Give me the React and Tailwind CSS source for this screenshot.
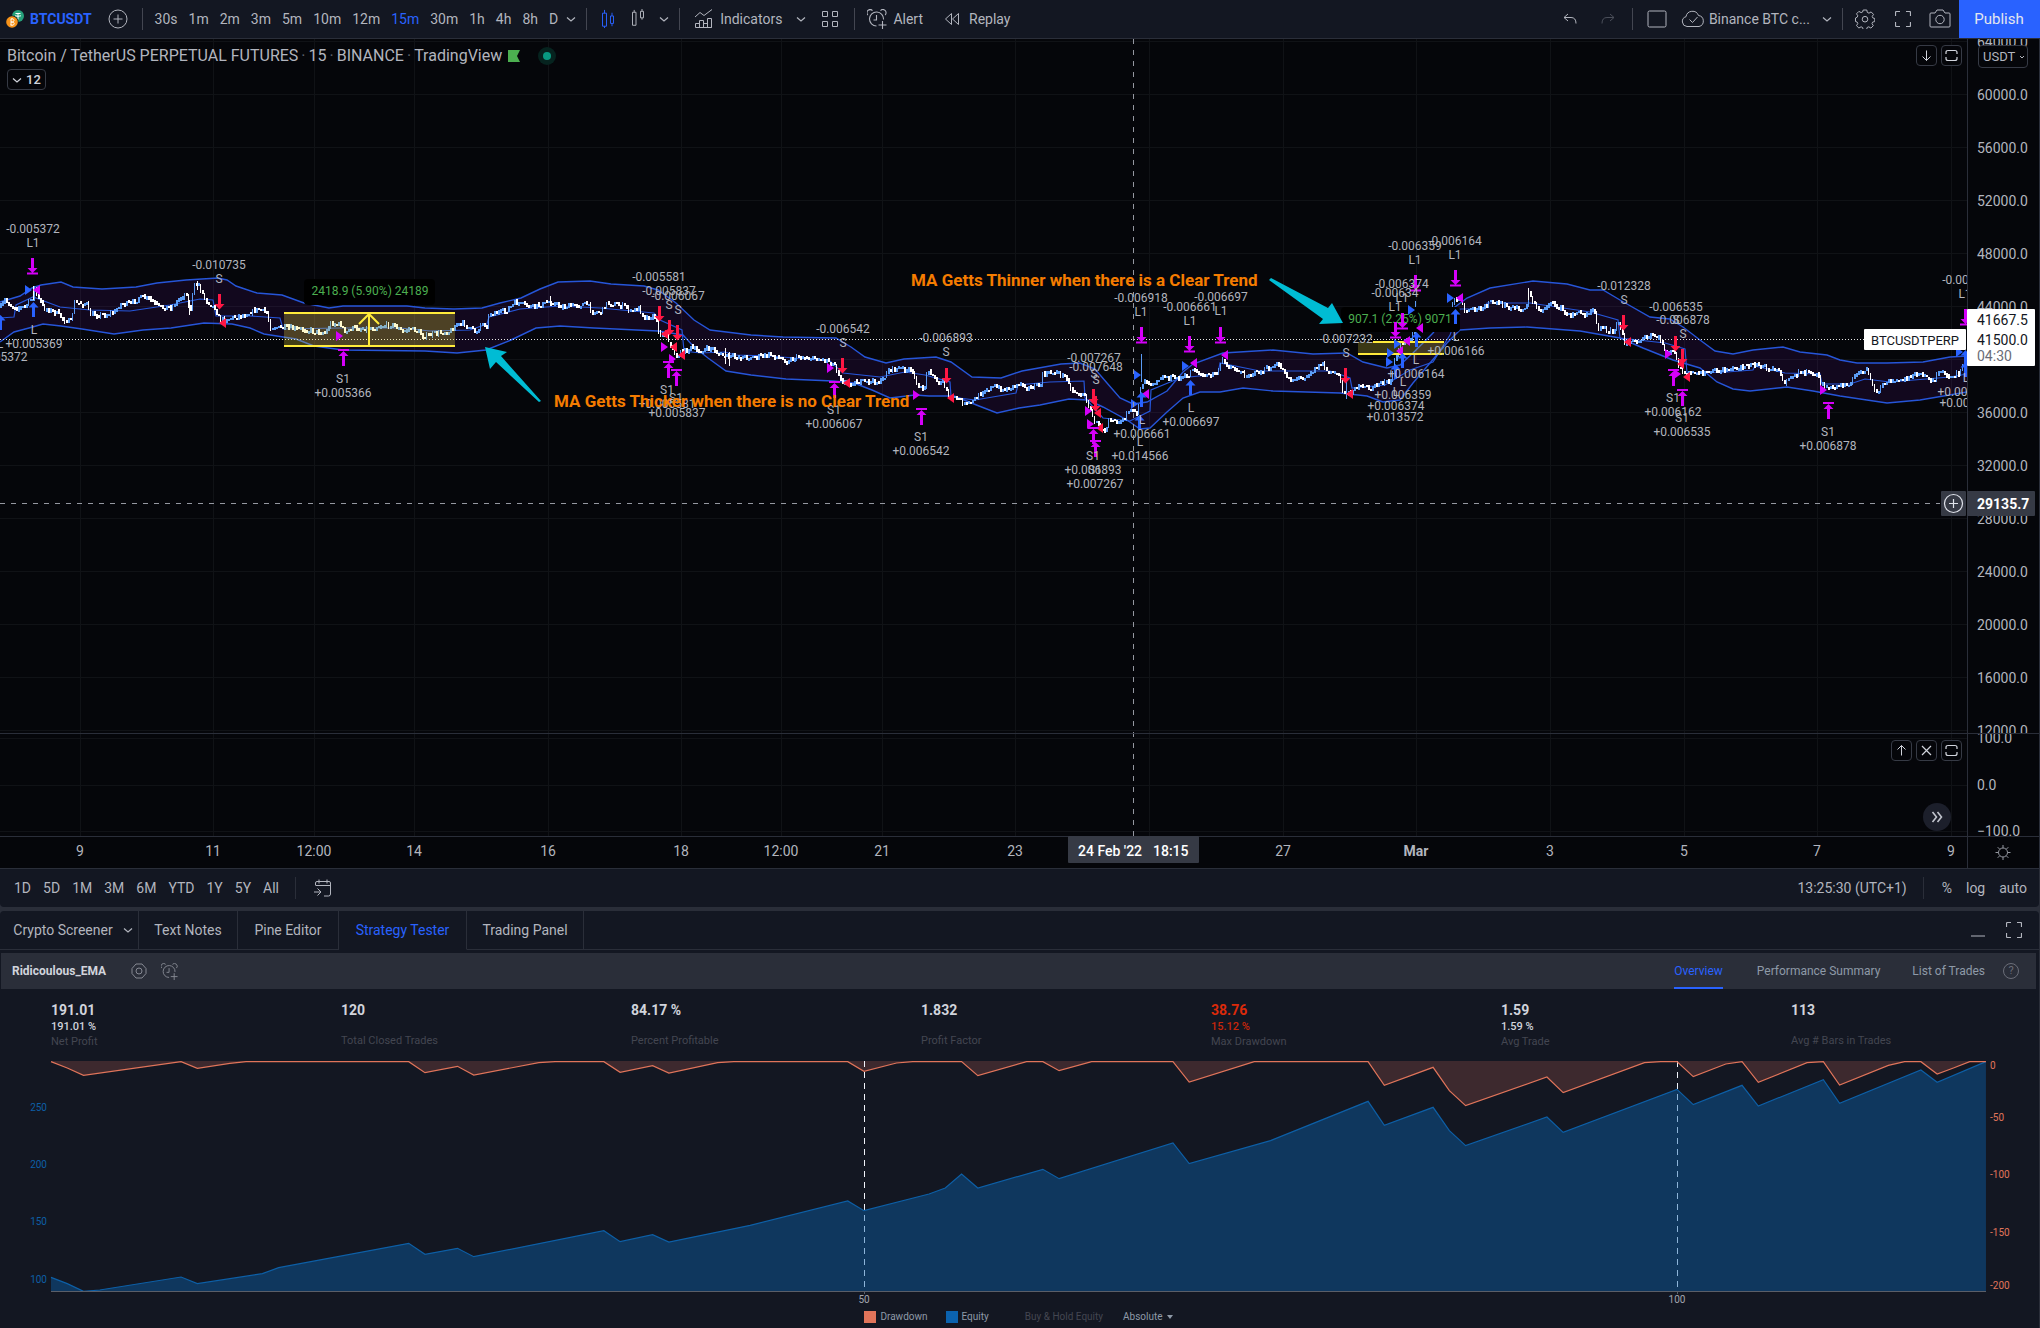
import React, { useState } from "react";

/* ---------- price chart data ---------- */

const PRICE = [
    [0, 307], [4, 300], [9, 305], [16, 308], [25, 306], [32, 297], [34, 288], [37, 298], [43, 308], [54, 312], [64, 320], [70, 322],
    [74, 303], [86, 304], [89, 315], [104, 315], [114, 312], [119, 304], [130, 304], [139, 297], [148, 299], [159, 308], [171, 307],
    [180, 297], [186, 293], [189, 315], [193, 288], [197, 283], [205, 300], [214, 308], [219, 320], [230, 318], [243, 315], [257, 309],
    [266, 313], [270, 327], [282, 328], [304, 330], [325, 333], [330, 323], [341, 325], [344, 334], [350, 328], [368, 329], [379, 326],
    [393, 325], [402, 332], [409, 328], [418, 332], [423, 337], [434, 334], [450, 331], [455, 325], [464, 324], [475, 333], [480, 324],
    [486, 325], [489, 313], [504, 312], [514, 303], [532, 307], [550, 302], [561, 307], [586, 304], [592, 312], [601, 312], [605, 303],
    [626, 307], [630, 312], [638, 308], [644, 317], [654, 317], [659, 333], [667, 335], [669, 345], [676, 357], [681, 352], [690, 348],
    [697, 352], [711, 348], [719, 355], [729, 357], [754, 357], [770, 355], [786, 361], [797, 357], [826, 360], [834, 365], [842, 382],
    [851, 383], [861, 382], [881, 382], [887, 370], [901, 368], [911, 372], [919, 387], [923, 393], [926, 372], [933, 373], [937, 387],
    [942, 378], [947, 397], [956, 398], [965, 405], [974, 400], [983, 390], [994, 387], [1004, 390], [1019, 383], [1029, 388], [1040, 385],
    [1042, 375], [1054, 372], [1067, 378], [1070, 390], [1085, 397], [1093, 420], [1100, 428], [1105, 430], [1108, 417], [1118, 422],
    [1128, 413], [1137, 412], [1140, 387], [1143, 380], [1150, 383], [1160, 377], [1173, 378], [1187, 377], [1192, 368], [1203, 377],
    [1218, 372], [1221, 360], [1227, 365], [1243, 375], [1260, 372], [1278, 365], [1290, 380], [1303, 377], [1322, 363], [1327, 373],
    [1338, 373], [1341, 387], [1346, 397], [1353, 387], [1370, 388], [1380, 382], [1390, 383], [1394, 360], [1400, 345], [1410, 337],
    [1416, 320], [1417, 315], [1447, 315], [1453, 300], [1460, 300], [1465, 312], [1480, 308], [1490, 302], [1507, 307], [1525, 310],
    [1528, 292], [1532, 303], [1540, 311], [1548, 303], [1560, 308], [1567, 317], [1573, 312], [1583, 315], [1593, 307], [1597, 327],
    [1612, 332], [1617, 323], [1623, 333], [1624, 343], [1637, 342], [1652, 335], [1660, 340], [1665, 353], [1673, 352], [1677, 363],
    [1683, 375], [1703, 373], [1727, 370], [1737, 367], [1757, 365], [1767, 368], [1777, 368], [1781, 380], [1785, 383], [1793, 375],
    [1800, 372], [1817, 375], [1820, 383], [1829, 389], [1840, 385], [1850, 383], [1860, 370], [1866, 370], [1870, 380], [1875, 395],
    [1883, 383], [1903, 380], [1912, 373], [1933, 380], [1938, 372], [1950, 379], [1958, 373], [1966, 357],
];

const UPPER = [
    [0, 302], [20, 296], [32, 288], [41, 285], [61, 282], [73, 287], [102, 289], [136, 287], [157, 283], [186, 280], [218, 278], [227, 280],
    [236, 286], [257, 293], [282, 295], [304, 303], [329, 308], [343, 306], [371, 306], [407, 306], [425, 308], [454, 309], [482, 308],
    [500, 303], [521, 298], [540, 289], [558, 282], [590, 281], [611, 284], [644, 286], [658, 290], [676, 303], [694, 320], [710, 330],
    [751, 335], [783, 337], [836, 338], [851, 347], [865, 357], [886, 363], [904, 359], [936, 357], [951, 362], [972, 377], [1001, 378],
    [1022, 371], [1061, 364], [1080, 363], [1095, 369], [1107, 383], [1120, 398], [1133, 404], [1147, 402], [1167, 391], [1183, 372],
    [1193, 364], [1223, 353], [1273, 350], [1313, 354], [1347, 353], [1363, 362], [1387, 368], [1400, 365], [1413, 353], [1433, 333],
    [1447, 313], [1467, 298], [1490, 288], [1533, 281], [1567, 284], [1590, 290], [1603, 290], [1620, 300], [1650, 317], [1670, 319],
    [1683, 327], [1700, 340], [1715, 351], [1733, 354], [1753, 350], [1783, 347], [1800, 352], [1827, 355], [1840, 360], [1857, 363],
    [1887, 363], [1923, 362], [1950, 357], [1967, 356],
];

const LOWER = [
    [0, 342], [14, 332], [29, 328], [43, 324], [61, 326], [82, 329], [114, 334], [143, 330], [171, 328], [204, 323], [232, 324], [250, 328],
    [264, 334], [296, 339], [314, 346], [343, 350], [425, 351], [457, 353], [486, 350], [511, 340], [536, 328], [560, 326], [594, 328],
    [658, 331], [683, 335], [694, 347], [708, 358], [726, 371], [751, 375], [786, 379], [833, 381], [854, 383], [872, 390], [890, 398],
    [915, 395], [929, 396], [954, 396], [979, 406], [997, 413], [1019, 408], [1040, 405], [1069, 399], [1088, 400], [1103, 407],
    [1127, 420], [1140, 429], [1150, 428], [1167, 412], [1183, 398], [1200, 392], [1220, 392], [1243, 388], [1273, 391], [1340, 393],
    [1367, 396], [1383, 402], [1400, 400], [1413, 383], [1430, 363], [1447, 343], [1460, 330], [1490, 328], [1527, 327], [1580, 331],
    [1620, 338], [1643, 348], [1673, 360], [1700, 368], [1717, 382], [1733, 389], [1750, 391], [1787, 387], [1813, 391], [1840, 396],
    [1887, 403], [1920, 400], [1967, 392],
];

const MIDDLE = [
    [0, 318], [14, 317], [16, 305], [33, 297], [60, 307], [90, 310], [130, 311], [170, 305], [200, 299], [213, 300], [216, 316], [250, 316],
    [280, 318], [283, 329], [340, 328], [400, 328], [430, 331], [470, 330], [487, 324], [489, 317], [520, 309], [560, 306], [600, 308],
    [654, 313], [660, 320], [682, 330], [684, 351], [700, 353], [725, 352], [735, 355], [770, 356], [830, 361], [843, 373], [880, 377],
    [905, 372], [925, 375], [950, 382], [951, 397], [975, 400], [1016, 393], [1018, 385], [1050, 382], [1084, 381], [1085, 398],
    [1103, 418], [1130, 421], [1150, 411], [1151, 390], [1180, 378], [1218, 374], [1220, 363], [1260, 371], [1330, 371], [1350, 378],
    [1352, 388], [1385, 385], [1410, 370], [1433, 362], [1450, 335], [1460, 309], [1485, 309], [1487, 303], [1530, 303], [1590, 312],
    [1618, 320], [1620, 338], [1665, 343], [1685, 349], [1687, 373], [1727, 372], [1753, 370], [1755, 366], [1785, 373], [1820, 374],
    [1822, 384], [1850, 384], [1865, 379], [1890, 382], [1950, 377], [1967, 374],
];

const SPIKES = [[33, 286, 300], [189, 300, 315], [197, 281, 290], [550, 296, 304], [725, 348, 364], [729, 352, 366], [1141, 354, 382], [1415, 301, 322], [1528, 288, 300], [1346, 382, 399]];

const lerp = (points, x) => {
    const i = points.findIndex((p) => p[0] >= x);
    if (i <= 0) return points[0][1];
    const [x0, y0] = points[i - 1];
    const [x1, y1] = points[i];
    return y0 + ((y1 - y0) * (x - x0)) / (x1 - x0);
};

const buildCandles = () => {
    let seed = 7;
    const rand = () => {
        seed = (seed * 16807) % 2147483647;
        return seed / 2147483647;
    };
    const candles = [];
    let prev = 307;
    for (let x = 0; x < 1966; x += 2) {
        const y = lerp(PRICE, x) + (rand() - 0.5) * 5;
        const top = Math.round(Math.min(prev, y) - rand() * 2);
        const bottom = Math.round(Math.max(prev, y) + rand() * 2);
        candles.push({ x, top, height: Math.max(2, bottom - top), up: y < prev });
        prev = y;
    }
    return candles;
};

const CANDLES = buildCandles();
const line = (points) => points.map((p) => p.join(",")).join(" ");

const GRID_X = [80, 213, 314, 414, 548, 681, 781, 882, 1015, 1149, 1283, 1416, 1550, 1684, 1817, 1951];
const PRICE_TICKS = ["64000.0", "60000.0", "56000.0", "52000.0", "48000.0", "44000.0", "40000.0", "36000.0", "32000.0", "28000.0", "24000.0", "20000.0", "16000.0", "12000.0"];
const TIME_TICKS = [
    [80, "9"], [213, "11"], [314, "12:00"], [414, "14"], [548, "16"], [681, "18"], [781, "12:00"], [882, "21"], [1015, "23"],
    [1283, "27"], [1416, "Mar"], [1550, "3"], [1684, "5"], [1817, "7"], [1951, "9"],
];

// text, center x, center y
const LABELS = [
    ["-0.005372", 33, 229], ["L1", 33, 243], ["L", 34, 330], ["+0.005369", 34, 344], ["L", 0, 344], ["+0.005372", -1, 357],
    ["-0.010735", 219, 265], ["S", 219, 279], ["S1", 343, 379], ["+0.005366", 343, 393],
    ["-0.005581", 659, 277], ["-0.005837", 669, 291], ["-0.006067", 678, 296], ["S", 669, 305], ["S", 678, 310],
    ["S1", 667, 390], ["S1", 676, 398], ["+0.005581", 667, 404], ["+0.005837", 677, 413],
    ["-0.006542", 843, 329], ["S", 843, 343], ["S1", 834, 410], ["+0.006067", 834, 424],
    ["-0.006893", 946, 338], ["S", 946, 352], ["S1", 921, 437], ["+0.006542", 921, 451],
    ["-0.007267", 1094, 358], ["-0.007648", 1096, 367], ["S", 1094, 374], ["S", 1096, 380],
    ["S1", 1093, 456], ["S1", 1095, 470], ["+0.006893", 1093, 470], ["+0.007267", 1095, 484],
    ["-0.006918", 1141, 298], ["L1", 1141, 312], ["-0.006661", 1190, 307], ["L1", 1190, 321], ["-0.006697", 1221, 297], ["L1", 1221, 311],
    ["L", 1142, 420], ["+0.006661", 1142, 434], ["L", 1140, 442], ["+0.014566", 1140, 456], ["L", 1191, 408], ["+0.006697", 1191, 422],
    ["-0.007232", 1346, 339], ["S", 1346, 353], ["-0.006359", 1415, 246], ["L1", 1415, 260], ["-0.006164", 1455, 241], ["L1", 1455, 255],
    ["-0.006374", 1402, 284], ["-0.00634", 1395, 293], ["L1", 1402, 298], ["L1", 1395, 307], ["L", 1456, 337], ["+0.006166", 1456, 351],
    ["L", 1416, 360], ["+0.006164", 1416, 374], ["L", 1403, 382], ["+0.006359", 1403, 395], ["L", 1396, 392], ["+0.006374", 1396, 406], ["+0.013572", 1395, 417],
    ["-0.012328", 1624, 286], ["S", 1624, 300], ["-0.006535", 1676, 307], ["-0.006878", 1683, 320], ["S", 1676, 320], ["S", 1683, 334],
    ["S1", 1673, 398], ["+0.006162", 1673, 412], ["S1", 1682, 418], ["+0.006535", 1682, 432], ["S1", 1828, 432], ["+0.006878", 1828, 446],
    ["-0.005366", 1969, 280], ["L1", 1965, 294], ["L", 1966, 378], ["+0.005372", 1966, 392], ["+0.005366", 1968, 403],
];

// kind, x, top
const ARROWS = [
    ["exitLong", 32, 258], ["exitLong", 1141, 327], ["exitLong", 1189, 336], ["exitLong", 1220, 327], ["exitLong", 1395, 322],
    ["exitLong", 1402, 313], ["exitLong", 1415, 275], ["exitLong", 1455, 270], ["exitLong", 1965, 309],
    ["exitShort", 343, 349], ["exitShort", 668, 361], ["exitShort", 676, 369], ["exitShort", 834, 381], ["exitShort", 921, 408],
    ["exitShort", 1093, 427], ["exitShort", 1095, 440], ["exitShort", 1673, 369], ["exitShort", 1682, 389], ["exitShort", 1828, 402],
    ["short", 219, 294], ["short", 659, 306], ["short", 669, 320], ["short", 677, 325], ["short", 842, 358], ["short", 946, 368],
    ["short", 1093, 389], ["short", 1095, 396], ["short", 1345, 368], ["short", 1623, 315], ["short", 1675, 336], ["short", 1682, 349],
    ["long", 33, 302], ["long", 0, 315], ["long", 1141, 392], ["long", 1139, 415], ["long", 1190, 380], ["long", 1395, 364],
    ["long", 1402, 353], ["long", 1416, 332], ["long", 1455, 309], ["long", 1965, 350], ["long", 1965, 362],
];

const ARROW_SHAPES = {
    exitLong: { d: "M-1.5 0h3v10h3.5l-5 5l-5-5h3.5zM-5.5 14.5h11v2h-11z", fill: "#d500f9" },
    exitShort: { d: "M-1.5 17h3v-10h3.5l-5-5l-5 5h3.5zM-5.5 0h11v2h-11z", fill: "#d500f9" },
    short: { d: "M-1.5 0h3v10h3.5l-5 5.5l-5-5.5h3.5z", fill: "#ff1744" },
    long: { d: "M-1.5 15h3v-9.5h3.5l-5-5.5l-5 5.5h3.5z", fill: "#2962ff" },
};

// tip x, center y, direction (-1 points left), color
const TRIANGLES = [
    ...[[33, 290], [1142, 394], [1190, 363], [1221, 355], [1403, 341], [1396, 351], [1416, 328], [1456, 298]].map((p) => [...p, -1, "#d500f9"]),
    ...[[219, 323], [661, 334], [670, 347], [678, 355], [843, 383], [947, 398], [1094, 413], [1096, 428], [1346, 394], [1624, 342], [1677, 364], [1683, 377]].map((p) => [...p, -1, "#ff1744"]),
    ...[[343, 336], [668, 347], [676, 359], [834, 368], [920, 395], [1092, 411], [1094, 424], [1672, 354], [1681, 374], [1827, 390]].map((p) => [...p, 1, "#d500f9"]),
    ...[[32, 290], [1141, 375], [1138, 404], [1189, 366], [1394, 353], [1393, 362], [1401, 344], [1415, 310], [1454, 298], [1963, 352]].map((p) => [...p, 1, "#2962ff"]),
];

/* ---------- strategy tester data ---------- */

// trade index, height on the plot
const EQUITY = [
    [0, 712], [1, 731], [2, 754], [3, 750], [8, 711], [9, 731], [13, 701], [14, 683], [22, 610], [23, 643], [25, 625], [26, 650], [34, 572],
    [35, 605], [37, 584], [38, 606], [43, 556], [49, 483], [50, 512], [54, 462], [55, 444], [56, 402], [57, 444], [61, 388], [62, 416],
    [69, 309], [70, 371], [75, 302], [81, 184], [82, 256], [85, 202], [86, 272], [87, 317], [92, 231], [93, 277], [100, 148], [101, 194],
    [104, 136], [105, 198], [109, 119], [110, 190], [115, 90], [116, 127], [119, 65],
];
const DRAWDOWN = [
    [0, 65], [1, 84], [2, 106], [8, 65], [9, 85], [11, 70], [12, 65], [22, 65], [23, 98], [25, 79], [26, 105], [30, 68], [31, 65], [34, 65],
    [35, 97], [37, 77], [38, 99], [41, 68], [42, 65], [49, 65], [50, 94], [52, 69], [53, 65], [56, 65], [57, 107], [60, 65], [61, 65],
    [62, 92], [64, 65], [69, 65], [70, 126], [74, 65], [81, 65], [82, 136], [85, 82], [86, 152], [87, 197], [92, 111], [93, 158], [98, 68],
    [99, 65], [100, 65], [101, 110], [103, 72], [104, 65], [105, 127], [108, 68], [109, 65], [110, 135], [113, 76], [114, 65], [115, 65],
    [116, 102], [117, 84], [118, 65], [119, 65],
];
const toPlot = (points) => points.map(([k, v]) => [51 + k * 16.26, 1040 + v / 3]);

const STATS = [
    { value: "191.01", percent: "191.01 %", label: "Net Profit" },
    { value: "120", label: "Total Closed Trades" },
    { value: "84.17 %", label: "Percent Profitable" },
    { value: "1.832", label: "Profit Factor" },
    { value: "38.76", percent: "15.12 %", label: "Max Drawdown", negative: true },
    { value: "1.59", percent: "1.59 %", label: "Avg Trade" },
    { value: "113", label: "Avg # Bars in Trades" },
];

const INTERVALS = ["30s", "1m", "2m", "3m", "5m", "10m", "12m", "15m", "30m", "1h", "4h", "8h", "D"];
const RANGES = ["1D", "5D", "1M", "3M", "6M", "YTD", "1Y", "5Y", "All"];

/* ---------- small pieces ---------- */

const Icon = ({ size = 20, className = "", children }) => (
    <svg width={size} height={size} viewBox={`0 0 ${size} ${size}`} fill="none" stroke="currentColor" className={`shrink-0 ${className}`} aria-hidden="true">
        {children}
    </svg>
);

const Chevron = ({ className = "" }) => (
    <Icon size={10} className={className}><path d="M1 3.5l4 3.5l4-3.5" strokeWidth="1.2" /></Icon>
);

const AlarmIcon = ({ className }) => (
    <Icon size={20} className={className}>
        <path d="M9.5 17A7 7 0 1 1 16.5 10.5M9.5 6v5H6.5M.8 6A3.2 3.2 0 0 1 5.5 1.6M18.2 6A3.2 3.2 0 0 0 13.5 1.6M15.5 12v8M11.5 16h8" strokeWidth="1.1" />
    </Icon>
);

const FullscreenIcon = () => (
    <Icon size={16}><path d="M.5 5V1.5a1 1 0 0 1 1-1H5M11 .5h3.5a1 1 0 0 1 1 1V5M15.5 11v3.5a1 1 0 0 1-1 1H11M5 15.5H1.5a1 1 0 0 1-1-1V11" strokeWidth="1.2" /></Icon>
);

const Separator = () => <span className="h-[22px] w-px shrink-0 bg-[#434651]" />;

const PaneButton = ({ label, children }) => (
    <button type="button" aria-label={label} className="flex size-[21px] items-center justify-center rounded-sm border border-[#363a45] bg-[#05060a] text-[#d1d4dc]">
        {children}
    </button>
);

const MaximizeGlyph = () => (
    <Icon size={13}><path d="M1 5V3.500q0-2 2-2h7q2 0 2 2V5M1 8v1.500q0 2 2 2h7q2 0 2-2V8" strokeWidth="1.2" /></Icon>
);

const TopToolbar = () => {
    const [interval, setInterval] = useState("15m");
    return (
        <header className="flex h-[39px] items-center justify-between border-b border-[#2a2e39] bg-[#131722] text-sm leading-5">
            <div className="flex items-center">
                <button type="button" className="ml-1.5 flex items-center gap-1.5 font-bold text-[#2962ff]">
                    <svg width="18" height="18" viewBox="0 0 18 18" aria-hidden="true">
                        <circle cx="12" cy="6" r="6" fill="#26a17b" />
                        <path d="M9.5 3.5h5M12 3.5v6M9 5.8q3 1 6 0" stroke="#fff" fill="none" />
                        <circle cx="6" cy="12" r="6.5" fill="#131722" />
                        <circle cx="6" cy="12" r="5.8" fill="#f7931a" />
                        <path d="M4.8 9h2q1.3.2 1.2 1.4T6.5 12H5q3.3-.3 3.2 1.5T6.5 15H4.3M5 9v6M6 8v1M6 15v1" stroke="#fff" fill="none" strokeWidth=".9" />
                    </svg>
                    BTCUSDT
                </button>
                <button type="button" aria-label="Compare symbol" className="mr-3.5 ml-4">
                    <Icon><circle cx="10" cy="10" r="9" /><path d="M10 5.5v9M5.5 10h9" /></Icon>
                </button>
                <Separator />
                <nav className="ml-3 flex items-center gap-[11px]">
                    {INTERVALS.map((item) => (
                        <button key={item} type="button" onClick={() => setInterval(item)} className={item === interval ? "text-[#2962ff]" : ""}>
                            {item}
                        </button>
                    ))}
                </nav>
                <button type="button" aria-label="More intervals" className="mr-2.5 ml-2"><Chevron /></button>
                <Separator />
                <button type="button" aria-label="Candles" className="ml-3.5 text-[#2962ff]">
                    <Icon><path d="M1.5 4.500h4v14h-4zM3.5 1v3.5M3.5 18.5v2M9.5 7.5h3v8h-3zM11 4v3.5M11 15.5v3" transform="scale(1 .93)" /></Icon>
                </button>
                <button type="button" aria-label="Hollow candles" className="ml-2.5">
                    <Icon><path d="M1.5 3.5h3.5v14H1.5zM3.2 1v2.5M9.5 2.5h3v7h-3zM11 0v2.5M11 9.5v2" transform="scale(1 .93)" /></Icon>
                </button>
                <button type="button" aria-label="Chart styles" className="mr-2.5 ml-2"><Chevron /></button>
                <Separator />
                <button type="button" className="ml-3.5 flex items-center gap-1.5">
                    <Icon><path d="M1.5 18.5v-4h4v4M5.5 18.5v-7h4v7M9.5 14.500h4M13.5 18.500v-9h4v9zM1.5 18.500h16M1 8l5-4.5l4 3l8-6" /></Icon>
                    Indicators
                </button>
                <button type="button" aria-label="Favorite indicators" className="ml-3.5"><Chevron /></button>
                <button type="button" aria-label="Templates" className="mr-3.5 ml-3.5">
                    <Icon><path d="M2.5 2.5h5v5h-5zM12.5 2.5h5v5h-5zM2.5 12.5h5v5h-5zM12.5 12.5h5v5h-5z" strokeLinejoin="round" /></Icon>
                </button>
                <Separator />
                <button type="button" className="ml-3 flex items-center gap-1.5"><AlarmIcon />Alert</button>
                <button type="button" className="ml-5 flex items-center gap-1.5">
                    <Icon><path d="M8.5 4.5L2.5 10l6 5.5zM15.5 4.5L9.5 10l6 5.5z" strokeLinejoin="round" /></Icon>
                    Replay
                </button>
            </div>
            <div className="flex h-full items-center">
                <button type="button" aria-label="Undo"><Icon><path d="M8 5L4 8.5L8 12M4 8.5h7q5 0 5 6" /></Icon></button>
                <button type="button" aria-label="Redo" className="mr-3.5 ml-[18px] text-[#4a4e59]"><Icon><path d="M12 5l4 3.5L12 12M16 8.5H9q-5 0-5 6" /></Icon></button>
                <Separator />
                <button type="button" aria-label="Layout" className="ml-3.5"><Icon><rect x="1" y="2" width="18" height="16" rx="1.5" /></Icon></button>
                <button type="button" className="ml-3.5 flex items-center gap-1">
                    <Icon size={24}><path d="M6 19.500a5 5 0 0 1-1-9.800a6.500 6.500 0 0 1 12.500-1.200a5.600 5.600 0 0 1 .5 11zM8.500 12.500l3 3l5-5.500" /></Icon>
                    Binance BTC c...
                </button>
                <button type="button" aria-label="Layouts" className="mr-2.5 ml-3"><Chevron /></button>
                <Separator />
                <button type="button" aria-label="Settings" className="ml-3">
                    <Icon><path d="M8.200 1h3.600l.5 2.400l1.700.8l2.100-1.300l2.400 2.500l-1.300 2.100l.6 1.400l2 .6v1.500l-.1 1.600l-2.100.5l-.6 1.500l1.300 2.100l-2.400 2.400l-2.100-1.300l-1.700.7l-.5 2.200H8.200l-.6-2.200l-1.500-.7l-2.200 1.200l-2.400-2.300l1.300-2.200l-.7-1.500L.5 12.500V9l1.600-.7l.7-1.500l-1.300-2l2.400-2.400l2.200 1.200l1.500-.6z" strokeLinejoin="round" /><circle cx="10" cy="10.200" r="2.800" /></Icon>
                </button>
                <button type="button" aria-label="Fullscreen" className="ml-5"><FullscreenIcon /></button>
                <button type="button" aria-label="Snapshot" className="mr-2 ml-[18px]">
                    <Icon size={22}><path d="M2 5h4l2-3h6l2 3h4q1 0 1 1v12q0 1-1 1H2q-1 0-1-1V6q0-1 1-1z" /><circle cx="11" cy="11.5" r="4.2" /></Icon>
                </button>
                <button type="button" className="h-full w-[81px] bg-[#2962ff] pr-px text-[15px] text-[#e3e6ee]">Publish</button>
            </div>
        </header>
    );
};

const PriceChart = () => (
    <svg viewBox="0 39 2039 829" className="block h-auto w-full" fontFamily='Roboto, "Open Sans", sans-serif' role="img" aria-label="BTCUSDT price chart">
        <defs>
            <clipPath id="plot"><rect x="0" y="39" width="1967" height="797" /></clipPath>
            <clipPath id="axisMain"><rect x="1968" y="39" width="71" height="694" /></clipPath>
            <clipPath id="axisSub"><rect x="1968" y="734" width="71" height="102" /></clipPath>
        </defs>
        <g fill="#101216" shapeRendering="crispEdges">
            {GRID_X.map((x) => <rect key={x} x={x} y="39" width="1" height="797" />)}
            {PRICE_TICKS.map((tick, i) => <rect key={tick} x="0" y={41 + i * 53} width="1967" height="1" />)}
            {[738, 785, 831].map((y) => <rect key={y} x="0" y={y} width="1967" height="1" />)}
        </g>
        <g clipPath="url(#plot)">
            <polygon points={`${line(UPPER)} ${line([...LOWER].reverse())}`} fill="#a020f0" fillOpacity=".085" />
            <g fill="none" stroke="#2655d8" strokeWidth="1.4">
                <polyline points={line(UPPER)} />
                <polyline points={line(LOWER)} />
                <polyline points={line(MIDDLE)} strokeWidth="1.2" />
            </g>
            <path d="M0 339.500H1967" stroke="#e8e8e8" strokeDasharray="1 2" />
            <g shapeRendering="crispEdges">
                {CANDLES.map((c) => (
                    <rect key={c.x} x={c.x} y={c.top} width={c.height > 6 ? 1 : 2} height={c.height} fill={c.up ? "#5b9cf6" : "#ffffff"} />
                ))}
                {SPIKES.map(([x, y0, y1]) => <rect key={x} x={x} y={y0} width="1" height={y1 - y0} fill={x > 1100 && x < 1420 ? "#5b9cf6" : "#ffffff"} />)}
            </g>

            {/* measured ranges */}
            <g stroke="#ffeb3b" strokeWidth="2" fill="none">
                <rect x="284" y="313" width="171" height="33" fill="#ffeb3b" fillOpacity=".25" stroke="none" />
                <path d="M284 313h171M284 346h171M369 346v-32M359 324l10-10l10 10" />
                <rect x="1358" y="342" width="86" height="12" fill="#ffeb3b" fillOpacity=".22" stroke="none" />
                <path d="M1373 342h71M1358 354h86" />
            </g>
            <rect x="304" y="279" width="131" height="26" rx="4" fill="#000" />
            <rect x="1341" y="307" width="119" height="25" rx="4" fill="#000" />
            <g fontSize="12" fill="#4caf50" textAnchor="middle">
                <text x="370" y="295">2418.9 (5.90%) 24189</text>
                <text x="1400" y="323">907.1 (2.25%) 9071</text>
            </g>

            {TRIANGLES.map(([x, y, dir, fill]) => (
                <path key={`${x}-${y}-${dir}`} d={`M${x} ${y}l${-7 * dir}-5v10z`} fill={fill} />
            ))}
            {ARROWS.map(([kind, x, y]) => (
                <path key={`${kind}-${x}-${y}`} d={ARROW_SHAPES[kind].d} fill={ARROW_SHAPES[kind].fill} transform={`translate(${x + 0.5} ${y})`} />
            ))}
            <g fontSize="12" fill="#b2b5be" textAnchor="middle">
                {LABELS.map(([text, x, y]) => <text key={`${text}-${x}-${y}`} x={x} y={y + 4}>{text}</text>)}
            </g>

            <g fill="#00bcd4">
                <path d="M485 347L507 352L501 356L541 401L539 402L496 362L490 369z" />
                <path d="M1343 323L1332 303L1328 308L1271 278L1269 280L1323 319L1319 324z" />
            </g>
            <g fill="#f57c00" fontSize="17" fontWeight="bold">
                <text x="911" y="286">MA Getts Thinner when there is a Clear Trend</text>
                <text x="554" y="407">MA Getts Thicker when there is no Clear Trend</text>
            </g>

            <g stroke="#9598a1" strokeDasharray="5 6">
                <path d="M1133.500 39V836" />
                <path d="M0 503.500H1940" />
            </g>
        </g>

        <g fill="#2a2e39" shapeRendering="crispEdges">
            <rect x="1967" y="39" width="1" height="829" />
            <rect x="0" y="733" width="2039" height="1" />
            <rect x="0" y="836" width="2039" height="1" />
        </g>
        <g fontSize="14" fill="#b2b5be">
            <g clipPath="url(#axisMain)">
                {PRICE_TICKS.map((tick, i) => <text key={tick} x="1977" y={47 + i * 53}>{tick}</text>)}
            </g>
            <g clipPath="url(#axisSub)">
                <text x="1977" y="743">100.0</text>
                <text x="1977" y="790">0.0</text>
                <text x="1977" y="836">−100.0</text>
            </g>
            <g textAnchor="middle">
                {TIME_TICKS.map(([x, label]) => (
                    <text key={x} x={x} y="856" fontWeight={label === "Mar" ? "bold" : "normal"}>{label}</text>
                ))}
            </g>
        </g>

        {/* last price and crosshair tags */}
        <rect x="1864" y="329" width="102" height="21" rx="1" fill="#fff" />
        <rect x="1967" y="309" width="68" height="57" rx="1" fill="#fff" />
        <rect x="1941" y="491" width="25" height="25" rx="1" fill="#363a45" />
        <rect x="1967" y="491" width="68" height="25" rx="1" fill="#363a45" />
        <rect x="1068" y="836" width="131" height="27" rx="1" fill="#363a45" />
        <g fontSize="14" fill="#131722">
            <text x="1915" y="345" fontSize="13" textAnchor="middle">BTCUSDTPERP</text>
            <text x="1977" y="325">41667.5</text>
            <text x="1977" y="345">41500.0</text>
            <text x="1977" y="361" fill="#6a6d78">04:30</text>
        </g>
        <g fontSize="14" fill="#fff" fontWeight="500">
            <text x="1977" y="509" fontWeight="bold">29135.7</text>
            <text x="1078" y="856">24 Feb '22</text>
            <text x="1153" y="856">18:15</text>
        </g>
        <g fill="none" stroke="#e0e3eb" strokeWidth="1.2">
            <circle cx="1953.5" cy="503.5" r="9" />
            <path d="M1953.5 499v9M1949 503.5h9" />
        </g>
        <g fill="none" stroke="#9598a1">
            <circle cx="2003" cy="852.5" r="4.5" />
            <path d="M2003 845v3M2003 857v3M1995.5 852.5h3M2007.5 852.5h3M1997.7 847.2l2 2M2006.3 855.8l2 2M1997.7 857.8l2-2M2006.3 849.2l2-2" />
        </g>
    </svg>
);

const TitleDot = () => <span className="text-[#5d606b]">·</span>;

const ChartArea = () => (
    <section className="relative border-r border-[#2a2e39] bg-[#05060a]">
        <PriceChart />
        <div className="absolute top-[7px] left-[7px] flex items-center text-base leading-5 text-[#b2b5be]">
            <h1 className="flex gap-[3px]">
                <span>Bitcoin / TetherUS PERPETUAL FUTURES</span>
                <TitleDot /><span>15</span>
                <TitleDot /><span>BINANCE</span>
                <TitleDot /><span>TradingView</span>
            </h1>
            <svg width="12" height="12" viewBox="0 0 12 12" className="ml-1.5" aria-hidden="true"><path d="M0 0h12l-3 6l3 6H0z" fill="#4caf50" /></svg>
            <span className="ml-[18px] flex size-[18px] items-center justify-center rounded-full bg-[#06231f]"><span className="size-2 rounded-full bg-[#089981]" /></span>
        </div>
        <button type="button" className="absolute top-[30px] left-[7px] flex h-[21px] w-[39px] items-center justify-center gap-1 rounded-sm border border-[#363a45] text-[13px] font-medium text-[#d1d4dc]">
            <Chevron />12
        </button>
        <div className="absolute top-1.5 right-[77px] flex gap-1">
            <PaneButton label="Move pane down"><Icon size={13}><path d="M6.500 1.500v10M2.500 7.500l4 4l4-4" /></Icon></PaneButton>
            <PaneButton label="Maximize pane"><MaximizeGlyph /></PaneButton>
        </div>
        <select aria-label="Currency" className="absolute top-1.5 right-[11px] h-[23px] w-[50px] appearance-none rounded-sm border border-[#363a45] bg-[#05060a] pl-1 text-[13px] text-[#b2b5be]">
            <option>USDT</option>
        </select>
        <Icon size={6} className="pointer-events-none absolute top-[15px] right-[14px] text-[#b2b5be]"><path d="M1 2l2 2l2-2" /></Icon>
        <div className="absolute right-[77px] bottom-[107px] flex gap-1">
            <PaneButton label="Move pane up"><Icon size={13}><path d="M6.500 11.500v-10M2.500 5.500l4-4l4 4" /></Icon></PaneButton>
            <PaneButton label="Close pane"><Icon size={13}><path d="M2 2l9 9M11 2l-9 9" strokeWidth="1.2" /></Icon></PaneButton>
            <PaneButton label="Maximize pane"><MaximizeGlyph /></PaneButton>
        </div>
        <button type="button" aria-label="Scroll to most recent bar" className="absolute right-[88px] bottom-[37px] flex size-7 items-center justify-center rounded-full bg-[#1c1f2b] text-[#c1c4cd]">
            <Icon size={14}><path d="M2.500 2l4 5l-4 5M7.500 2l4 5l-4 5" strokeWidth="1.6" /></Icon>
        </button>
    </section>
);

const RangeToolbar = () => (
    <div className="flex h-[39px] items-center justify-between rounded-b border-t border-[#2a2e39] bg-[#131722] pr-3 pl-3.5 text-sm leading-5">
        <div className="flex items-center gap-3">
            {RANGES.map((range) => <button key={range} type="button">{range}</button>)}
            <span className="mr-1 ml-1 h-[22px] w-px bg-[#2a2e39]" />
            <button type="button" aria-label="Go to date">
                <Icon><path d="M3.5 7V5q0-1.500 1.500-1.500h12q1.500 0 1.500 1.500v11q0 2-2 2H12M3.500 7.500h15M7 1.500v4M15 1.500v4M2 14h6.500M5.500 10.500l3.500 3.500l-3.500 3.500" /></Icon>
            </button>
        </div>
        <div className="flex items-center gap-3.5">
            <button type="button">13:25:30 (UTC+1)</button>
            <span className="mr-1 ml-0.5 h-[22px] w-px bg-[#2a2e39]" />
            <button type="button">%</button>
            <button type="button">log</button>
            <button type="button">auto</button>
        </div>
    </div>
);

const TABS = [
    { name: "Crypto Screener", width: "w-[139px]" },
    { name: "Text Notes", width: "w-[99px]" },
    { name: "Pine Editor", width: "w-[101px]" },
    { name: "Strategy Tester", width: "w-[128px]" },
    { name: "Trading Panel", width: "w-[117px]" },
];

const BottomTabs = () => {
    const [active, setActive] = useState("Strategy Tester");
    return (
        <div className="flex h-[39px] rounded-t bg-[#131722] text-sm leading-5">
            {TABS.map((tab, i) => (
                <button
                    key={tab.name}
                    type="button"
                    onClick={() => setActive(tab.name)}
                    className={`flex items-center justify-center gap-2.5 border-r border-b border-r-[#2a2e39] ${tab.width} ${i === 0 ? "pl-2" : ""} ${tab.name === active ? "border-b-transparent text-[#2962ff]" : "border-b-[#2a2e39]"}`}
                >
                    {tab.name}
                    {i === 0 && <Chevron />}
                </button>
            ))}
            <div className="flex flex-1 items-center justify-end gap-5 border-b border-[#2a2e39] pr-[17px]">
                <button type="button" aria-label="Minimize panel"><Icon size={16}><path d="M1 14h14" /></Icon></button>
                <button type="button" aria-label="Maximize panel"><FullscreenIcon /></button>
            </div>
        </div>
    );
};

const EquityChart = () => {
    const equity = toPlot(EQUITY);
    const drawdown = toPlot(DRAWDOWN);
    return (
        <svg viewBox="0 1052 2039 254" className="block h-auto w-full" fontFamily='Roboto, "Open Sans", sans-serif' fontSize="10" role="img" aria-label="Equity and drawdown">
            <polygon points={`51,1061 ${line(drawdown)} 1986,1061`} fill="#3d292e" />
            <path d="M864.500 1061v230M1677.500 1061v230" stroke="#f0f3fa" strokeDasharray="6 5" />
            <polygon points={`51,1291 ${line(equity)} 1986,1291`} fill="#0b62ae" fillOpacity=".43" />
            <polyline points={line(equity)} fill="none" stroke="#0d5fa6" strokeWidth="1.2" />
            <polyline points={line(drawdown)} fill="none" stroke="#e0745a" strokeWidth="1.2" />
            <path d="M51 1291.500H1986M864.500 1291v3M1677.500 1291v3" stroke="#5a5e68" />
            <g fill="#0d5fa6" textAnchor="end">
                <text x="47" y="1111">250</text>
                <text x="47" y="1168">200</text>
                <text x="47" y="1225">150</text>
                <text x="47" y="1283">100</text>
            </g>
            <g fill="#e0745a">
                <text x="1990" y="1069">0</text>
                <text x="1990" y="1121">-50</text>
                <text x="1990" y="1178">-100</text>
                <text x="1990" y="1236">-150</text>
                <text x="1990" y="1289">-200</text>
            </g>
            <g fill="#a3a6af" textAnchor="middle">
                <text x="864" y="1303">50</text>
                <text x="1677" y="1303">100</text>
            </g>
        </svg>
    );
};

const StrategyTester = () => (
    <section className="bg-[#131722] pt-[3px] pb-px">
        <div className="mr-[3px] ml-px flex h-9 items-center justify-between bg-[#2a2e39] pr-[17px] pl-[11px] text-xs leading-4">
            <div className="flex items-center">
                <h2 className="font-bold text-[#d1d4dc]">Ridicoulous_EMA</h2>
                <button type="button" aria-label="Strategy settings" className="ml-[25px] text-[#868993]">
                    <Icon size={16}><path d="M5 1h6l4 4.500v5L11 15H5l-4-4.500v-5z" strokeLinejoin="round" /><circle cx="8" cy="8" r="3" /></Icon>
                </button>
                <button type="button" aria-label="Add alert" className="ml-3.5 text-[#868993]"><AlarmIcon className="size-[17px]" /></button>
            </div>
            <nav className="flex h-full items-center text-[#8e9aa8]">
                <button type="button" className="mr-[34px] h-full border-b-2 border-[#2962ff] pt-0.5 text-[#2962ff]">Overview</button>
                <button type="button" className="mr-8">Performance Summary</button>
                <button type="button" className="mr-[18px]">List of Trades</button>
                <button type="button" aria-label="Help" className="text-[#6a6d78]">
                    <span className="flex size-4 items-center justify-center rounded-full border border-current text-[11px] leading-3">?</span>
                </button>
            </nav>
        </div>
        <dl className="grid h-[63px] grid-cols-[repeat(6,290fr)_237fr] pt-[13px] pr-[11px] pl-[51px] text-[11px]">
            {STATS.map((stat) => (
                <div key={stat.label} className="flex h-[45px] flex-col">
                    <dd className={`text-sm leading-4 font-bold ${stat.negative ? "text-[#dc2a0a]" : "text-[#d1d4dc]"}`}>{stat.value}</dd>
                    {stat.percent && <dd className={`leading-[17px] font-medium ${stat.negative ? "text-[#c8260a]" : "text-[#d1d4dc]"}`}>{stat.percent}</dd>}
                    <dt className="mt-auto leading-[13px] text-[#434651]">{stat.label}</dt>
                </div>
            ))}
        </dl>
        <EquityChart />
        <div className="flex h-[21px] items-center justify-center pr-[2px] text-[10px] leading-4 text-[#8e9aa8]">
            <button type="button" className="mr-[18px] flex items-center gap-1"><span className="size-3 bg-[#e0745a]" />Drawdown</button>
            <button type="button" className="mr-9 flex items-center gap-1"><span className="size-3 bg-[#0b62ae]" />Equity</button>
            <button type="button" className="mr-5 text-[#434651]">Buy &amp; Hold Equity</button>
            <button type="button" className="flex items-center gap-1">
                Absolute
                <svg width="6" height="4" viewBox="0 0 6 4" fill="currentColor" aria-hidden="true"><path d="M0 0h6L3 4z" /></svg>
            </button>
        </div>
    </section>
);

const App = () => (
    <main className="w-full bg-[#2a2e39] font-[Roboto,'Open_Sans',sans-serif] text-[#b2b5be]">
        <TopToolbar />
        <ChartArea />
        <div className="mr-px">
            <RangeToolbar />
            <div className="mt-1">
                <BottomTabs />
                <StrategyTester />
            </div>
        </div>
    </main>
);

export default App;
